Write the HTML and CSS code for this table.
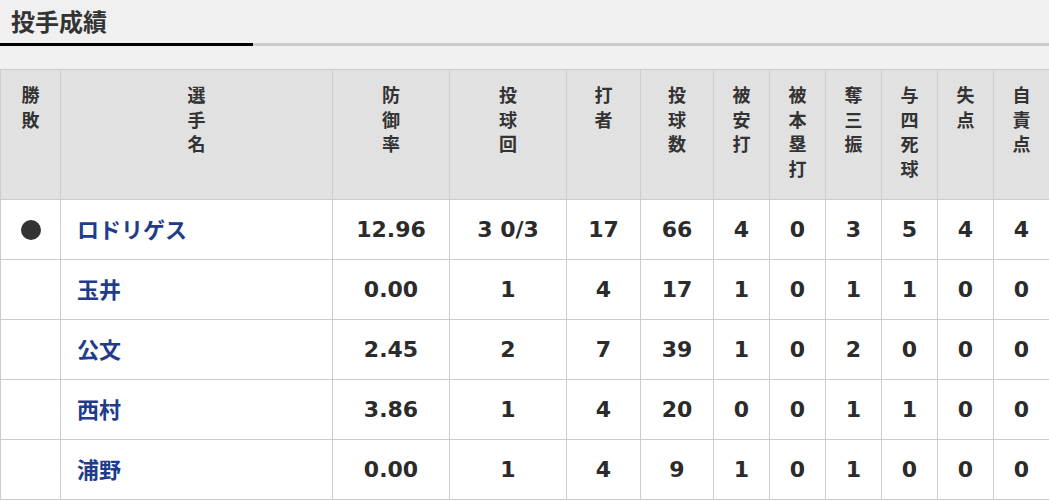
FILE: index.html
```html
<!DOCTYPE html>
<html lang="ja">
<head>
<meta charset="utf-8">
<link rel="stylesheet" href="styles.css">
</head>
<body>
<div class="section">
  <h2 class="title">投手成績</h2>
  <div class="bar"><span class="bar-active"></span></div>
  <table class="stats">
    <colgroup>
      <col class="c-wl"><col class="c-name"><col class="c-era"><col class="c-ip">
      <col class="c-bf"><col class="c-np"><col class="c-s"><col class="c-s">
      <col class="c-s"><col class="c-s"><col class="c-s"><col class="c-s">
    </colgroup>
    <thead>
      <tr>
        <th>勝<br>敗</th>
        <th>選<br>手<br>名</th>
        <th>防<br>御<br>率</th>
        <th>投<br>球<br>回</th>
        <th>打<br>者</th>
        <th>投<br>球<br>数</th>
        <th>被<br>安<br>打</th>
        <th>被<br>本<br>塁<br>打</th>
        <th>奪<br>三<br>振</th>
        <th>与<br>四<br>死<br>球</th>
        <th>失<br>点</th>
        <th>自<br>責<br>点</th>
      </tr>
    </thead>
    <tbody>
      <tr>
        <td class="wl"><span class="dot"></span></td>
        <td class="name"><a href="#">ロドリゲス</a></td>
        <td>12.96</td><td>3 0/3</td><td>17</td><td>66</td><td>4</td><td>0</td><td>3</td><td>5</td><td>4</td><td>4</td>
      </tr>
      <tr>
        <td class="wl"></td>
        <td class="name"><a href="#">玉井</a></td>
        <td>0.00</td><td>1</td><td>4</td><td>17</td><td>1</td><td>0</td><td>1</td><td>1</td><td>0</td><td>0</td>
      </tr>
      <tr>
        <td class="wl"></td>
        <td class="name"><a href="#">公文</a></td>
        <td>2.45</td><td>2</td><td>7</td><td>39</td><td>1</td><td>0</td><td>2</td><td>0</td><td>0</td><td>0</td>
      </tr>
      <tr>
        <td class="wl"></td>
        <td class="name"><a href="#">西村</a></td>
        <td>3.86</td><td>1</td><td>4</td><td>20</td><td>0</td><td>0</td><td>1</td><td>1</td><td>0</td><td>0</td>
      </tr>
      <tr>
        <td class="wl"></td>
        <td class="name"><a href="#">浦野</a></td>
        <td>0.00</td><td>1</td><td>4</td><td>9</td><td>1</td><td>0</td><td>1</td><td>0</td><td>0</td><td>0</td>
      </tr>
    </tbody>
  </table>
</div>
</body>
</html>
```
FILE: styles.css
```css
html, body {
  margin: 0;
  padding: 0;
  overflow: hidden;
}
body {
  background: #f0f0f0;
  color: #333;
  font-family: "Noto Sans CJK JP", sans-serif;
}
.title {
  margin: 0;
  padding-left: 11px;
  height: 43px;
  line-height: 42px;
  font-size: 24px;
  font-weight: bold;
  color: #333;
}
.bar {
  display: flex;
  height: 3px;
  background: #cccccc;
  margin-bottom: 23px;
}
.bar-active {
  width: 253px;
  background: #000;
}
.stats {
  width: 1049px;
  table-layout: fixed;
  border-collapse: collapse;
  background: #fff;
}
.c-wl { width: 60px; }
.c-name { width: 272px; }
.c-era { width: 117px; }
.c-ip { width: 117px; }
.c-bf { width: 74px; }
.c-np { width: 73px; }
.c-s { width: 56px; }
.stats th {
  background: #e1e1e1;
  border: 1px solid #cccccc;
  height: 117px;
  vertical-align: top;
  padding: 12px 0 0;
  font-size: 18px;
  line-height: 24.5px;
  font-weight: bold;
  color: #333;
}
.stats td {
  border: 1px solid #cccccc;
  height: 59px;
  padding: 0;
  text-align: center;
  vertical-align: middle;
  font-family: "DejaVu Sans", "Noto Sans CJK JP", sans-serif;
  font-size: 22px;
  font-weight: bold;
  color: #2b2b2b;
}
.stats td.name {
  text-align: left;
  height: 55px;
  padding: 0 0 4px 16px;
  font-family: "Noto Sans CJK JP", sans-serif;
  font-size: 22px;
}
.stats td.wl {
  height: 57px;
  padding-bottom: 2px;
}
.name a {
  color: #1f3c8c;
  text-decoration: none;
}
.dot {
  display: inline-block;
  width: 20px;
  height: 20px;
  border-radius: 50%;
  background: #333;
  vertical-align: middle;
}
```
